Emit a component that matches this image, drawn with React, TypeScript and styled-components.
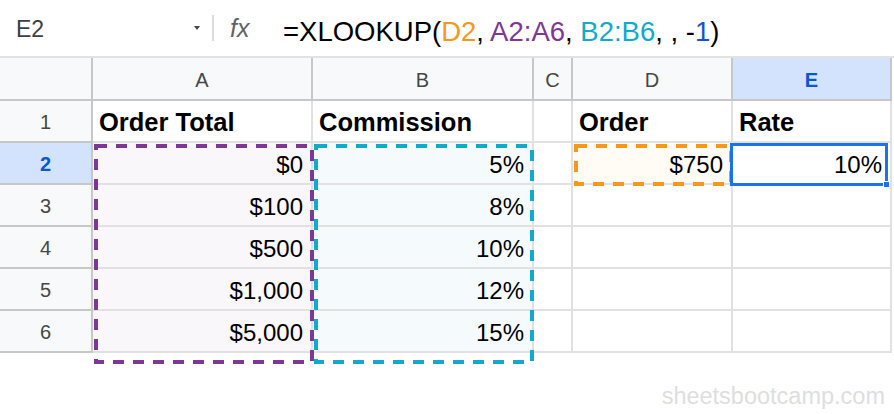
import React from 'react';
import styled, { createGlobalStyle } from 'styled-components';

const GlobalStyle = createGlobalStyle`
  body {
    margin: 0;
    background: #ffffff;
    font-family: "Liberation Sans", Arial, sans-serif;
  }
`;

const Page = styled.div`
  width: 894px;
  height: 414px;
  overflow: hidden;
  background: #ffffff;
`;

/* formula bar */

const FormulaBar = styled.div`
  display: flex;
  align-items: center;
  height: 58px;
  box-sizing: border-box;
  border-bottom: 2px solid #e1e3e1;
`;

const NameBox = styled.div`
  display: flex;
  align-items: center;
  justify-content: space-between;
  width: 212px;
  box-sizing: border-box;
  padding: 2px 12px 0 16px;
  font-size: 23px;
  color: #3c4043;
`;

const Caret = styled.span`
  width: 0;
  height: 0;
  border-left: 3px solid transparent;
  border-right: 3px solid transparent;
  border-top: 4px solid #444746;
  margin-top: -2px;
`;

const Divider = styled.div`
  width: 2px;
  height: 26px;
  background: #dadce0;
`;

const Fx = styled.div`
  width: 53px;
  margin-left: 16px;
  font-size: 25px;
  font-style: italic;
  color: #5f6368;
`;

const Formula = styled.div`
  font-size: 27.5px;
  color: #000000;
  white-space: nowrap;
  padding-top: 7px;
`;

const Ref = styled.span<{ $color: string }>`
  color: ${({ $color }) => $color};
`;

/* grid */

const Sheet = styled.div`
  position: relative;
  display: grid;
  grid-template-columns: 93px 220px 221px 39px 160px 159px;
  width: 892px;
`;

const ColHead = styled.div<{ $active?: boolean }>`
  height: 43px;
  box-sizing: border-box;
  padding-top: 4px;
  display: flex;
  align-items: center;
  justify-content: center;
  border-right: 2px solid #c7c7c7;
  border-bottom: 2px solid #c7c7c7;
  background: ${({ $active }) => ($active ? '#d3e3fd' : '#f8f9fa')};
  color: ${({ $active }) => ($active ? '#0b57d0' : '#444746')};
  font-weight: ${({ $active }) => ($active ? 'bold' : 'normal')};
  font-size: 20px;
`;

const RowHead = styled.div<{ $active?: boolean }>`
  height: 42px;
  box-sizing: border-box;
  padding-top: 2px;
  display: flex;
  align-items: center;
  justify-content: center;
  border-right: 2px solid #c7c7c7;
  border-bottom: 2px solid #c7c7c7;
  background: ${({ $active }) => ($active ? '#d3e3fd' : '#f8f9fa')};
  color: ${({ $active }) => ($active ? '#0b57d0' : '#444746')};
  font-weight: ${({ $active }) => ($active ? 'bold' : 'normal')};
  font-size: 20px;
`;

const Cell = styled.div<{ $bold?: boolean; $fill?: string }>`
  height: 42px;
  box-sizing: border-box;
  padding: 3px 8px 0 6px;
  display: flex;
  align-items: center;
  justify-content: ${({ $bold }) => ($bold ? 'flex-start' : 'flex-end')};
  border-right: 2px solid #e1e1e1;
  border-bottom: 2px solid #e1e1e1;
  background: ${({ $fill }) => $fill || '#ffffff'};
  font-size: ${({ $bold }) => ($bold ? '25.5px' : '24px')};
  font-weight: ${({ $bold }) => ($bold ? 'bold' : 'normal')};
  color: #000000;
  white-space: nowrap;
`;

/* range highlights drawn over the grid */

const RangeBox = styled.svg`
  position: absolute;
  overflow: visible;
  pointer-events: none;
`;

const Selection = styled.div`
  position: absolute;
  left: 730px;
  top: 85px;
  width: 158px;
  height: 43px;
  box-sizing: border-box;
  border: 3px solid #1a73e8;
`;

const Handle = styled.span`
  position: absolute;
  right: -5px;
  bottom: -5px;
  width: 5px;
  height: 5px;
  background: #1a73e8;
  border: 1px solid #ffffff;
`;

const Watermark = styled.div`
  margin-top: 32px;
  padding-right: 9px;
  text-align: right;
  font-size: 23.5px;
  line-height: 23px;
  color: #dedede;
`;

const PURPLE = '#7e3794';
const CYAN = '#11a9cc';
const ORANGE = '#f7981d';

const FILL_A = '#faf7fb';
const FILL_B = '#f5fbfc';
const FILL_D = '#fffcf5';

const cols = ['A', 'B', 'C', 'D', 'E'];

const rows: string[][] = [
  ['Order Total', 'Commission', '', 'Order', 'Rate'],
  ['$0', '5%', '', '$750', '10%'],
  ['$100', '8%', '', '', ''],
  ['$500', '10%', '', '', ''],
  ['$1,000', '12%', '', '', ''],
  ['$5,000', '15%', '', '', ''],
];

const fillFor = (r: number, c: number) => {
  if (r === 0) return undefined;
  if (c === 0) return FILL_A;
  if (c === 1) return FILL_B;
  if (c === 3 && r === 1) return FILL_D;
  return undefined;
};

const Range = ({ x, y, w, h, color }: { x: number; y: number; w: number; h: number; color: string }) => (
  <RangeBox style={{ left: x, top: y }} width={w} height={h}>
    <rect
      x={2}
      y={2}
      width={w - 4}
      height={h - 4}
      fill="none"
      stroke={color}
      strokeWidth={4}
      strokeDasharray="11 9"
    />
  </RangeBox>
);

export default function App() {
  return (
    <Page>
      <GlobalStyle />
      <FormulaBar>
        <NameBox>
          E2
          <Caret />
        </NameBox>
        <Divider />
        <Fx>fx</Fx>
        <Formula>
          =XLOOKUP(<Ref $color={ORANGE}>D2</Ref>, <Ref $color={PURPLE}>A2:A6</Ref>,{' '}
          <Ref $color={CYAN}>B2:B6</Ref>, , -<Ref $color="#1155cc">1</Ref>)
        </Formula>
      </FormulaBar>

      <Sheet>
        <ColHead />
        {cols.map((c) => (
          <ColHead key={c} $active={c === 'E'}>
            {c}
          </ColHead>
        ))}
        {rows.map((row, r) => (
          <React.Fragment key={r}>
            <RowHead $active={r === 1}>{r + 1}</RowHead>
            {row.map((v, c) => (
              <Cell key={c} $bold={r === 0} $fill={fillFor(r, c)}>
                {v}
              </Cell>
            ))}
          </React.Fragment>
        ))}

        <Range x={94} y={86} w={220} h={220} color={PURPLE} />
        <Range x={314} y={86} w={220} h={220} color={CYAN} />
        <Range x={574} y={86} w={159} h={42} color={ORANGE} />
        <Selection>
          <Handle />
        </Selection>
      </Sheet>

      <Watermark>sheetsbootcamp.com</Watermark>
    </Page>
  );
}
